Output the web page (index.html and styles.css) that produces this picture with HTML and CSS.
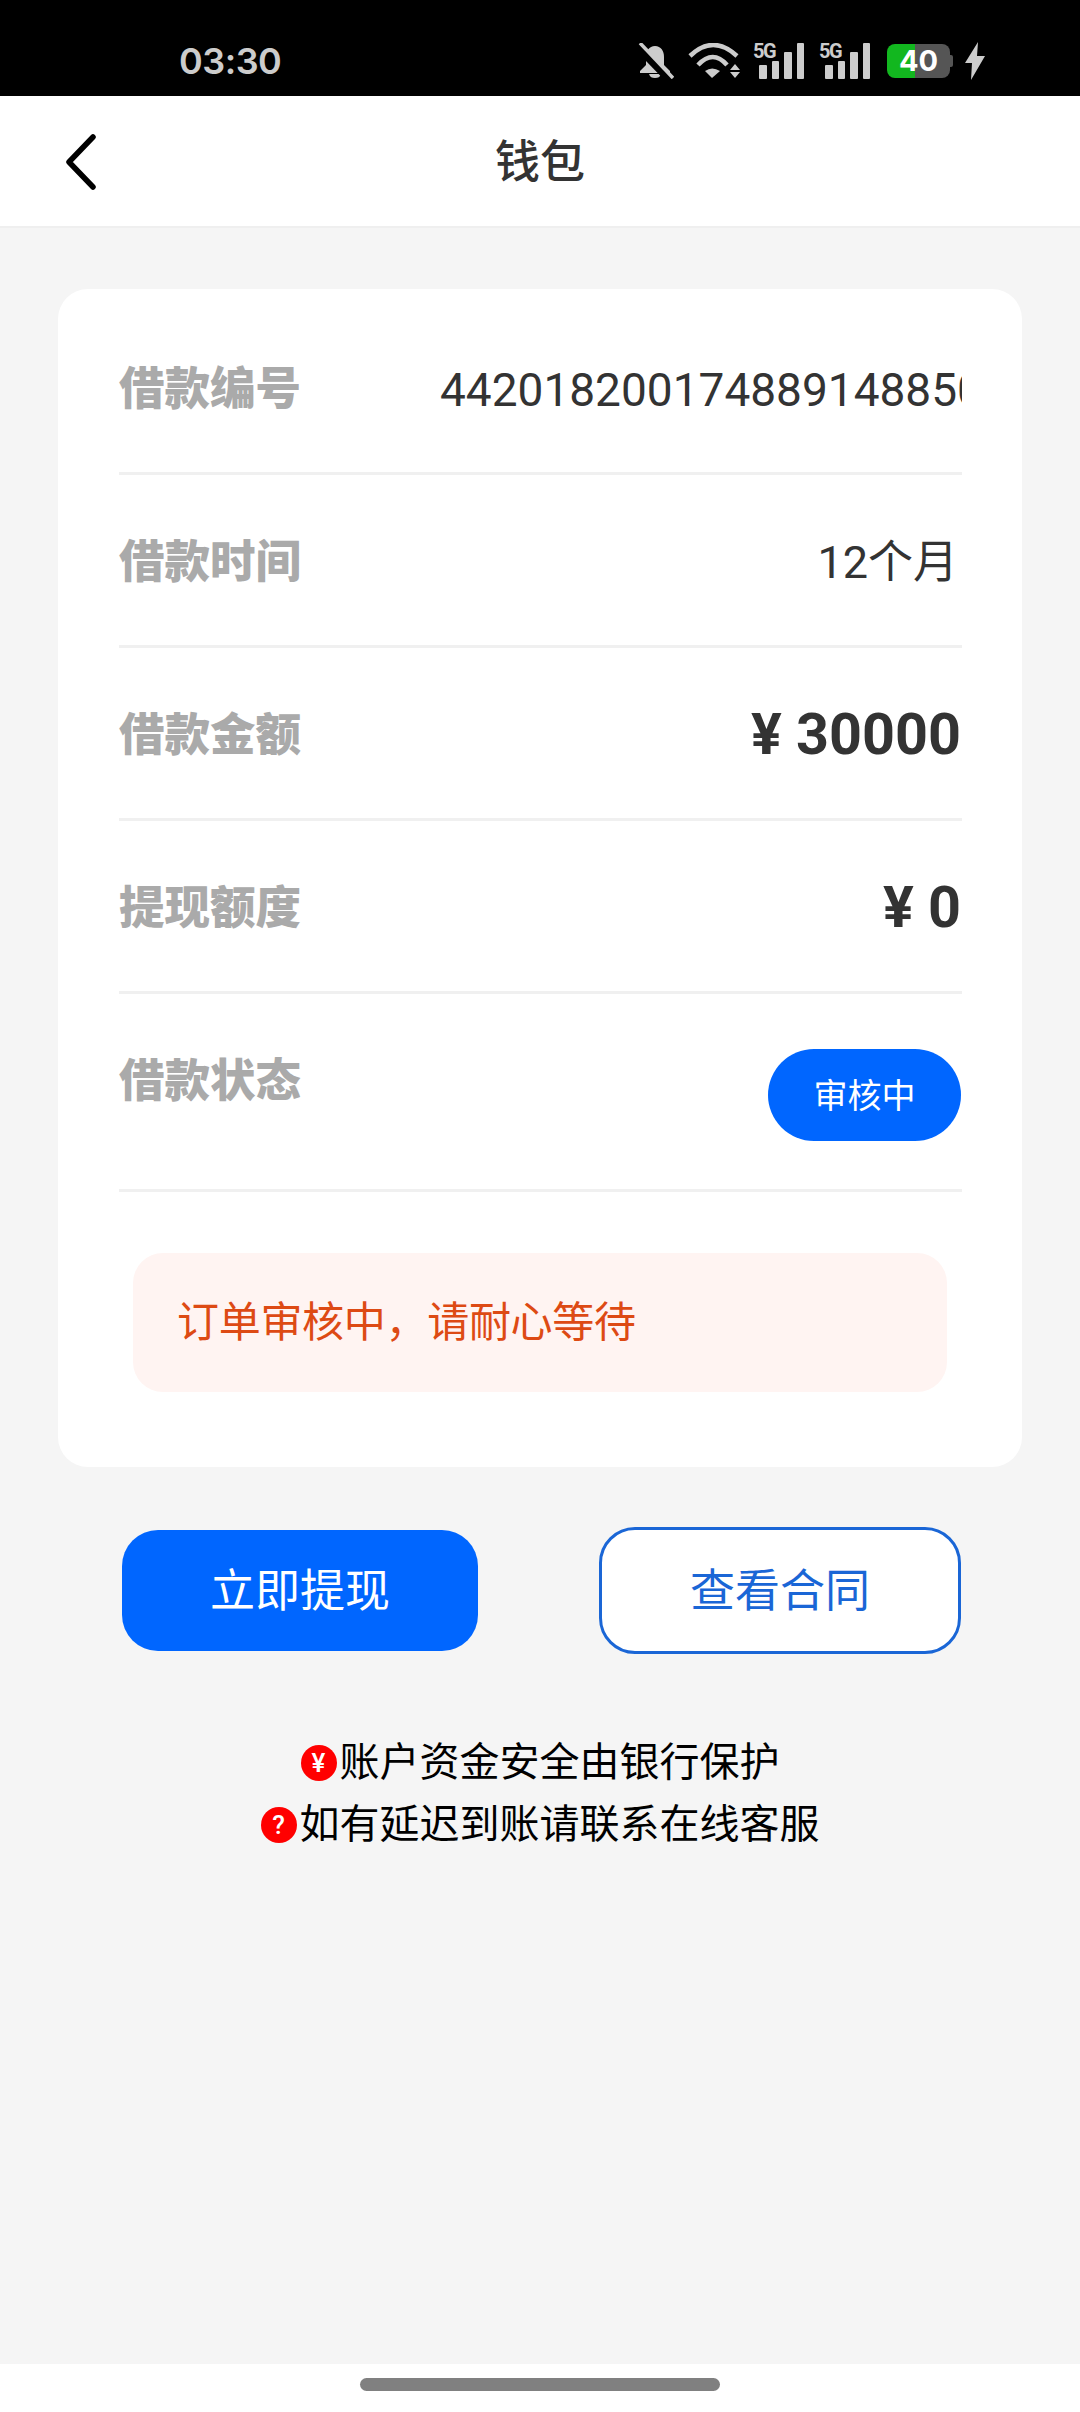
FILE: index.html
```html
<!DOCTYPE html>
<html lang="zh-CN">
<head>
  <meta charset="UTF-8" />
  <meta name="viewport" content="width=device-width, initial-scale=1.0" />
  <title>钱包</title>
  <link rel="stylesheet" href="styles.css">
</head>
<body>
  <div class="status-bar">
    <span class="time">03:30</span>
    <div class="status-icons">
      <svg class="ic-bell" width="36" height="36" viewBox="0 0 36 36">
        <path d="M17 3c-6 0-9 5-9 11v8l-6 6v2h30v-2l-6-6v-8c0-6-3-11-9-11z" fill="#ccc"/>
        <path d="M11 31h12c-1 3-3 4-6 4s-5-1-6-4z" fill="#ccc"/>
        <path d="M-2 2L31 36" stroke="#000" stroke-width="8"/>
        <path d="M2 0L35 35" stroke="#ccc" stroke-width="3.500"/>
      </svg>
      <svg class="ic-wifi" width="53" height="36" viewBox="0 0 53 36">
        <g fill="none" stroke="#ccc" stroke-width="4.500">
          <path d="M2 13Q25 -9 49 13"/>
          <path d="M10 22Q25 6 39 22"/>
        </g>
        <path d="M17 28Q24 23 32 28L24 35z" fill="#ccc"/>
        <path d="M42 27L47 21 52 27zM42 29h10l-5 6z" fill="#ccc"/>
      </svg>
      <div class="signal">
        <span class="net">5G</span>
        <span class="bar b1"></span><span class="bar b2"></span><span class="bar b3"></span><span class="bar b4"></span>
      </div>
      <div class="signal signal-last">
        <span class="net">5G</span>
        <span class="bar b1"></span><span class="bar b2"></span><span class="bar b3"></span><span class="bar b4"></span>
      </div>
      <div class="battery"><span class="battery-text">40</span></div>
      <svg class="ic-bolt" width="20" height="38" viewBox="0 0 20 38">
        <path d="M13 0L0 21h7L6 38 20 14h-8z" fill="#ccc"/>
      </svg>
    </div>
  </div>

  <header class="nav">
    <svg class="back" width="32" height="56" viewBox="0 0 32 56">
      <path d="M28 3L4 28l24 25" fill="none" stroke="#000" stroke-width="5.500" stroke-linecap="round" stroke-linejoin="round"/>
    </svg>
    <h1 class="nav-title">钱包</h1>
  </header>

  <main class="content">
    <div class="card">
      <div class="row">
        <span class="label">借款编号</span>
        <div class="value value-scroll">44201820017488914885091</div>
      </div>
      <div class="row">
        <span class="label">借款时间</span>
        <span class="value value-month">12个月</span>
      </div>
      <div class="row">
        <span class="label">借款金额</span>
        <span class="value value-money">¥ 30000</span>
      </div>
      <div class="row">
        <span class="label">提现额度</span>
        <span class="value value-money">¥ 0</span>
      </div>
      <div class="row row-status">
        <span class="label">借款状态</span>
        <span class="pill">审核中</span>
      </div>
      <div class="notice">订单审核中，请耐心等待</div>
    </div>

    <div class="actions">
      <button class="btn btn-primary">立即提现</button>
      <button class="btn btn-outline">查看合同</button>
    </div>

    <div class="tips">
      <p class="tip"><span class="tip-icon">¥</span>账户资金安全由银行保护</p>
      <p class="tip"><span class="tip-icon">?</span>如有延迟到账请联系在线客服</p>
    </div>
  </main>

  <div class="home-bar"><span class="home-pill"></span></div>
</body>
</html>
```

FILE: styles.css
```css
* {
  box-sizing: border-box;
}
body {
  font-family: 'Roboto', 'Noto Sans CJK SC', sans-serif;
  background-color: #f5f5f5;
  color: #333;
  margin: 0;
  padding: 0;
  width: 1080px;
  height: 2412px;
  display: flex;
  flex-direction: column;
  overflow: hidden;
}

/* status bar */
.status-bar {
  height: 96px;
  background: #000;
  display: flex;
  align-items: center;
  padding: 25px 0 0 179px;
  flex: none;
}
.time {
  font-family: 'Inter', sans-serif;
  font-size: 36px;
  font-weight: 600;
  color: #ccc;
  width: 459px;
  letter-spacing: -0.5px;
}
.status-icons {
  display: flex;
  align-items: center;
}
.ic-bell {
  margin-right: 14px;
}
.ic-wifi {
  margin-right: 12px;
}
.signal {
  position: relative;
  width: 51px;
  height: 36px;
  margin-right: 15px;
  display: flex;
  align-items: flex-end;
  justify-content: flex-end;
  gap: 5px;
}
.signal-last {
  margin-right: 17px;
}
.net {
  position: absolute;
  left: 0;
  top: -2px;
  font-family: 'Roboto', sans-serif;
  font-size: 20px;
  line-height: 20px;
  font-weight: 700;
  color: #ccc;
  letter-spacing: -1.5px;
}
.bar {
  width: 7.5px;
  background: #ccc;
  border-radius: 1px;
}
.b1 { height: 14px; }
.b2 { height: 18px; }
.b3 { height: 27px; }
.b4 { height: 36px; }
.battery {
  position: relative;
  width: 63px;
  height: 34px;
  border-radius: 8px;
  background: linear-gradient(to right, #12b71f 28px, #555 28px);
  display: flex;
  align-items: center;
  justify-content: center;
  margin-right: 15px;
}
.battery::after {
  content: "";
  position: absolute;
  right: -3px;
  top: 11px;
  width: 3px;
  height: 12px;
  border-radius: 0 2px 2px 0;
  background: #555;
}
.battery-text {
  font-family: 'Inter', sans-serif;
  font-size: 29px;
  font-weight: 700;
  color: #fff;
}

/* nav */
.nav {
  position: relative;
  height: 132px;
  background: #fff;
  border-bottom: 2px solid #efefef;
  display: flex;
  align-items: center;
  justify-content: center;
  padding-bottom: 5px;
  flex: none;
}
.back {
  position: absolute;
  left: 65px;
  top: 38px;
}
.nav-title {
  margin: 0;
  font-size: 45px;
  font-weight: 500;
  color: #333;
}

/* card */
.content {
  flex: 1;
  padding: 61px 58px 0;
}
.card {
  background: #fff;
  border-radius: 30px;
  height: 1178px;
  padding: 13px 60px 0 61px;
}
.row {
  height: 173px;
  border-bottom: 3px solid #f0f0f0;
  padding-top: 5px;
  display: flex;
  align-items: center;
  justify-content: space-between;
}
.label {
  font-size: 45.5px;
  line-height: 60px;
  font-weight: 900;
  color: #aaa;
  flex: none;
}
.value {
  font-size: 46px;
  line-height: 60px;
  color: #333;
}
.value-scroll {
  width: 522px;
  overflow: hidden;
  white-space: nowrap;
}
.value-month {
  font-size: 45px;
  padding-right: 4px;
}
.value-money {
  font-size: 57.5px;
  font-weight: 700;
  margin: -2px 1px 0 0;
}
.row-status {
  height: 198px;
  padding-top: 0;
  align-items: flex-start;
}
.row-status .label {
  margin-top: 58px;
}
.pill {
  margin: 55px 1px 0 0;
  width: 193px;
  height: 92px;
  border-radius: 46px;
  background: #0066ff;
  color: #fff;
  font-size: 34px;
  padding-bottom: 3px;
  display: flex;
  align-items: center;
  justify-content: center;
}
.notice {
  margin: 61px 15px 0 14px;
  height: 139px;
  border-radius: 30px;
  background: #fff4f2;
  color: #dd4a14;
  font-size: 42px;
  letter-spacing: -0.3px;
  display: flex;
  align-items: center;
  padding: 0 0 8px 44px;
}

/* buttons */
.actions {
  display: flex;
  justify-content: space-between;
  align-items: center;
  margin: 60px 61px 0 64px;
}
.btn {
  font-family: inherit;
  font-size: 45px;
  border-radius: 36px;
  padding: 0 0 7px;
}
.btn-primary {
  width: 356px;
  height: 121px;
  background: #0066ff;
  color: #fff;
  border: none;
}
.btn-outline {
  width: 362px;
  height: 127px;
  background: #fff;
  color: #1a66d6;
  border: 3px solid #1a66d6;
}

/* tips */
.tips {
  margin-top: 78px;
  text-align: center;
}
.tip {
  margin: 0;
  height: 62px;
  font-size: 40px;
  line-height: 62px;
  color: #000;
  display: flex;
  align-items: center;
  justify-content: center;
}
.tip-icon {
  width: 36px;
  height: 36px;
  border-radius: 50%;
  background: #f00;
  color: #fff;
  font-size: 26px;
  font-weight: 500;
  line-height: 36px;
  text-align: center;
  margin-right: 3px;
}

/* home indicator */
.home-bar {
  height: 48px;
  background: #fff;
  flex: none;
  display: flex;
  justify-content: center;
  padding-top: 14px;
}
.home-pill {
  width: 360px;
  height: 13px;
  border-radius: 7px;
  background: #808080;
}
```
